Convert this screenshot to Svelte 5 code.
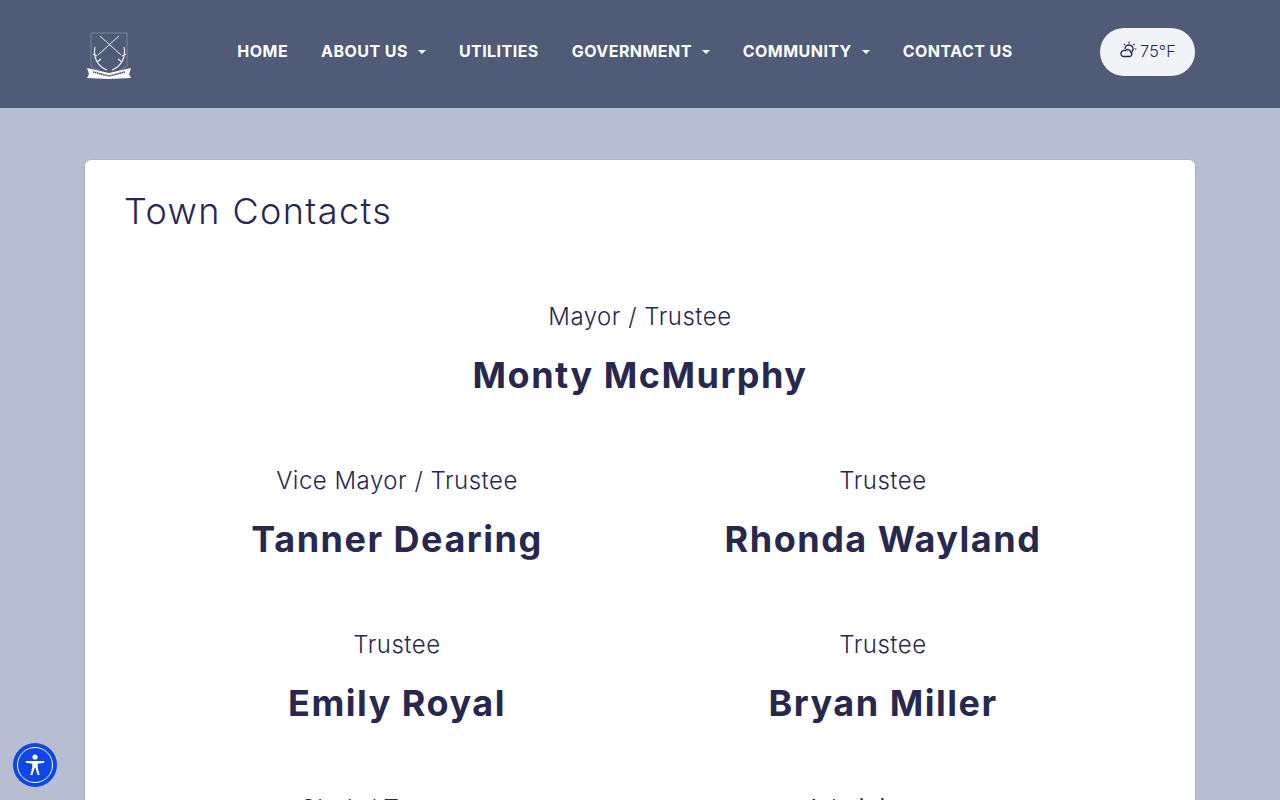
<script>
  const nav = [
    { label: 'HOME' },
    { label: 'ABOUT US', caret: true },
    { label: 'UTILITIES' },
    { label: 'GOVERNMENT', caret: true },
    { label: 'COMMUNITY', caret: true },
    { label: 'CONTACT US' }
  ];
  const people = [
    { role: 'Vice Mayor / Trustee', name: 'Tanner Dearing' },
    { role: 'Trustee', name: 'Rhonda Wayland' },
    { role: 'Trustee', name: 'Emily Royal' },
    { role: 'Trustee', name: 'Bryan Miller' },
    { role: 'Clerk / Treasurer', name: 'Town Clerk' },
    { role: 'Administrator', name: 'Town Staff' }
  ];
</script>

<div class="page">
  <header class="header">
    <div class="inner">
      <svg class="logo" viewBox="0 0 48 50" width="48" height="50" aria-label="Town logo">
        <path d="M6 3H42V36L24 47L6 36Z" fill="none" stroke="#8e97ad" stroke-width="0.7" />
        <path d="M13 25L34 6M36 25L15 6" stroke="#e8ebf0" stroke-width="1" fill="none" />
        <path d="M10 17C8 27 12 36 22 40M39 17C41 27 37 36 27 40M8 24L12 26M41 24L37 26M12 32L16 29M37 32L33 29" stroke="#eef0f4" stroke-width="1.2" fill="none" />
        <path d="M2 38L24 43L46 38L44 44L46 48L24 49L2 48L4 44Z" fill="#fff" />
        <path d="M8 42L24 46L40 42" stroke="#3c3c4c" stroke-width="1.6" stroke-dasharray="1.4 .7" fill="none" />
      </svg>
      <nav class="nav">
        {#each nav as item}
          <span class="link">{item.label}{#if item.caret}<i class="caret"></i>{/if}</span>
        {/each}
      </nav>
      <div class="weather">
        <svg viewBox="0 0 18 18" width="18" height="18" fill="none" stroke="#28284f" stroke-width="1.4">
          <path d="M4.5 15.5H10.5C13 15.5 13.8 12 11.5 11C11.5 8.5 8 7.5 6.5 9.6C3.8 8.8 1.5 10.8 2 13C2.2 14.5 3.2 15.5 4.5 15.5Z" />
          <path d="M6 8C6 5.5 8 4 10 4C12.5 4 14.2 6 14 8.4C13.9 9.4 13.4 10.3 12.7 11" />
          <path d="M10 2.6V.8M14.2 4.2L15.5 2.9M15.6 8H17.4M6 4.2L4.9 3" stroke-width="1.2" />
        </svg>
        <span class="temp">75°F</span>
      </div>
    </div>
  </header>

  <main class="card">
    <h1>Town Contacts</h1>
    <section class="lead person">
      <p>Mayor / Trustee</p>
      <h2>Monty McMurphy</h2>
    </section>
    <section class="grid">
      {#each people as p}
        <div class="person">
          <p>{p.role}</p>
          <h2>{p.name}</h2>
        </div>
      {/each}
    </section>
  </main>

  <button class="a11y" aria-label="Accessibility">
    <span class="ring">
      <svg viewBox="0 0 24 24" width="26" height="26" fill="#fff">
        <circle cx="12" cy="4.6" r="2.4" />
        <path d="M3.5 8.2h17v1.7l-6 .9v3.4l1.8 7h-1.9L12.5 15h-1l-1.9 6.2H7.7l1.8-7v-3.4l-6-.9z" />
      </svg>
    </span>
  </button>
</div>

<style>
  :global(body) {
    margin: 0;
    background: #b8bed2;
    font-family: Inter, "Open Sans", sans-serif;
    color: #28284f;
  }
  .page {
    height: 800px;
    overflow: hidden;
    position: relative;
  }
  .header {
    background: #505b77;
    height: 108px;
  }
  .inner {
    width: 1110px;
    margin: 0 auto;
    height: 100%;
    display: flex;
    align-items: center;
    justify-content: space-between;
    box-sizing: border-box;
    padding-bottom: 4px;
  }
  .logo { margin-top: 6px; }
  .nav {
    display: flex;
    gap: 33px;
    margin-left: 17px;
    margin-top: -2px;
  }
  .link {
    color: #fff;
    font-weight: 700;
    font-size: 16px;
    letter-spacing: 0.45px;
    white-space: nowrap;
  }
  .caret {
    display: inline-block;
    margin-left: 10px;
    vertical-align: 3px;
    border-top: 4px solid #fff;
    border-left: 4px solid transparent;
    border-right: 4px solid transparent;
  }
  .weather {
    width: 95px;
    height: 48px;
    border-radius: 24px;
    background: #f1f3f6;
    display: flex;
    align-items: center;
    justify-content: center;
    gap: 3px;
    font-size: 16px;
    color: #28284f;
  }
  .temp { letter-spacing: 0.1px; font-weight: 350; margin-top: -3px; }
  .weather svg { margin-top: -4px; }
  .card {
    width: 1110px;
    box-sizing: border-box;
    margin: 52px auto 0;
    background: #fff;
    box-shadow: 0 0 0 0.5px #a6adc2;
    border-radius: 6px;
    padding: 25px 40px 0;
    height: 800px;
  }
  h1 {
    margin: 0 0 0 -1px;
    font-weight: 350;
    font-size: 36px;
    line-height: 52px;
    letter-spacing: 1.4px;
  }
  .person {
    text-align: center;
    height: 164px;
  }
  .lead { margin-top: 62px; }
  .person p {
    margin: 0;
    font-size: 24px;
    line-height: 36px;
    font-weight: 350;
    letter-spacing: 0.5px;
  }
  .person h2 {
    margin: 18px 0 0;
    font-size: 36px;
    line-height: 44px;
    font-weight: 700;
    letter-spacing: 1.5px;
  }
  .grid {
    display: grid;
    grid-template-columns: 486px 486px;
    justify-content: center;
  }
  .a11y {
    position: absolute;
    left: 13px;
    top: 743px;
    width: 44px;
    height: 44px;
    padding: 0;
    border: 0;
    border-radius: 50%;
    background: #0f46e8;
    display: flex;
    align-items: center;
    justify-content: center;
  }
  .ring {
    width: 36px;
    height: 36px;
    border: 1.5px solid #fff;
    box-sizing: border-box;
    border-radius: 50%;
    display: flex;
    align-items: center;
    justify-content: center;
  }
</style>
